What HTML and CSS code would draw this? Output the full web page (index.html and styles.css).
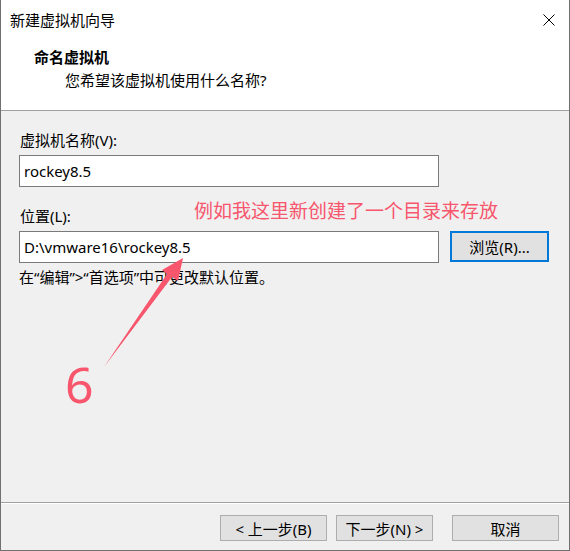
FILE: index.html
```html
<!DOCTYPE html>
<html lang="zh-CN">
<head>
  <meta charset="UTF-8">
  <title>新建虚拟机向导</title>
  <link rel="stylesheet" href="styles.css">
</head>
<body>
  <div class="window">
    <div class="titlebar">
      <span class="title">新建虚拟机向导</span>
      <svg class="close" width="12" height="12" viewBox="0 0 12 12">
        <path d="M0.5 0.5 L11.5 11.5 M11.5 0.5 L0.5 11.5" stroke="#000" stroke-width="1" fill="none"/>
      </svg>
    </div>

    <div class="header">
      <div class="head-title">命名虚拟机</div>
      <div class="head-sub">您希望该虚拟机使用什么名称?</div>
    </div>

    <div class="content">
      <label class="label">虚拟机名称(V):</label>
      <div class="field">rockey8.5</div>

      <label class="label second">位置(L):</label>
      <div class="row">
        <div class="field">D:\vmware16\rockey8.5</div>
        <button class="browse">浏览(R)...</button>
      </div>
      <p class="hint">在“编辑”&gt;“首选项”中可更改默认位置。</p>
    </div>

    <div class="footer">
      <button class="btn back">&lt; 上一步(B)</button>
      <button class="btn next">下一步(N) &gt;</button>
      <button class="btn cancel">取消</button>
    </div>

    <!-- annotation drawn on top of the screenshot -->
    <div class="note">例如我这里新创建了一个目录来存放</div>
    <div class="step">6</div>
    <svg class="arrow" width="570" height="551" viewBox="0 0 570 551">
      <polygon points="183,258 178,281 172,277 104,367 167,274 162,270" fill="#f7566d"/>
    </svg>
  </div>
</body>
</html>
```

FILE: styles.css
```css
* {
  box-sizing: border-box;
}
body {
  margin: 0;
  padding: 0;
  background: #fff;
  font-family: "Noto Sans", "Noto Sans CJK SC", sans-serif;
  font-size: 15px;
  color: #000;
}
.window {
  position: relative;
  width: 570px;
  height: 551px;
  border: 1px solid #707070;
  border-top: none;
  display: flex;
  flex-direction: column;
  background: #f0f0f0;
}
.titlebar {
  height: 40px;
  background: #fff;
  display: flex;
  align-items: center;
  justify-content: space-between;
  padding: 0 14px 0 9px;
}
.title {
  line-height: 20px;
}
.header {
  height: 71px;
  background: #fff;
  border-bottom: 1px solid #a0a0a0;
  padding-top: 7px;
}
.head-title {
  font-weight: bold;
  line-height: 20px;
  padding-left: 33px;
}
.head-sub {
  line-height: 20px;
  margin-top: 3px;
  padding-left: 64px;
}
.content {
  flex: 1;
  padding: 19px 0 0 18px;
}
.label {
  display: block;
  line-height: 20px;
  padding-left: 1px;
}
.label.second {
  margin-top: 19px;
}
.field {
  width: 420px;
  height: 32px;
  margin-top: 5px;
  border: 1px solid #7a7a7a;
  background: #fff;
  padding-left: 4px;
  line-height: 30px;
}
.row {
  display: flex;
  align-items: flex-start;
  gap: 11px;
  margin-top: 5px;
}
.row .field {
  margin-top: 0;
}
.browse {
  width: 99px;
  height: 31px;
  border: 2px solid #0078d7;
  background: #e1e1e1;
  font-family: inherit;
  font-size: 15px;
  padding: 0;
  color: #000;
}
.hint {
  margin: 4px 0 0 0;
  line-height: 20px;
}
.footer {
  height: 48px;
  border-top: 1px solid #a0a0a0;
  box-shadow: inset 0 1px 0 #fff;
  display: flex;
  justify-content: flex-end;
  align-items: flex-start;
  padding: 12px 10px 0 0;
}
.btn {
  height: 26px;
  border: 1px solid #adadad;
  background: #e1e1e1;
  font-family: inherit;
  font-size: 15px;
  color: #000;
  padding: 0;
}
.back {
  width: 107px;
}
.next {
  width: 97px;
  margin-left: 9px;
}
.cancel {
  width: 107px;
  margin-left: 19px;
}
.note {
  position: absolute;
  left: 193px;
  top: 199px;
  font-size: 19px;
  line-height: 24px;
  color: #f7566d;
  white-space: nowrap;
}
.step {
  position: absolute;
  left: 64px;
  top: 352px;
  font-size: 50px;
  line-height: 64px;
  color: #f7566d;
}
.arrow {
  position: absolute;
  left: -1px;
  top: 0;
  pointer-events: none;
}
```
